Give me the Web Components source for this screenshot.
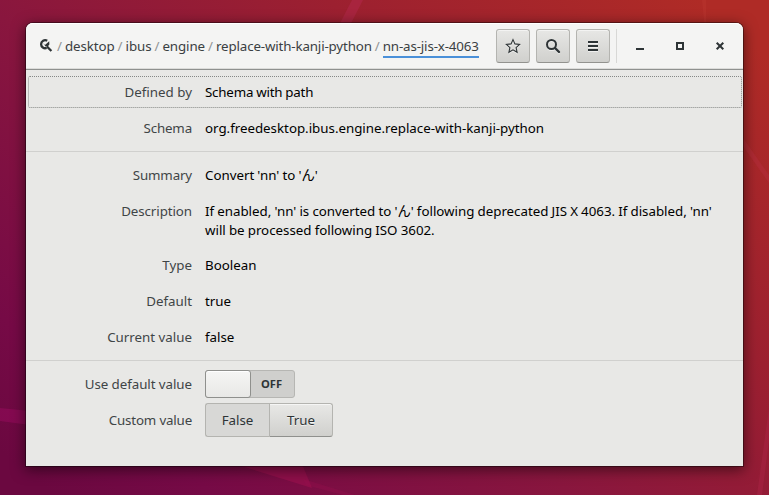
<!DOCTYPE html>
<html lang="en"><head><meta charset="utf-8"><title>dconf Editor</title>
<style>html,body{margin:0;height:100%;overflow:hidden}</style></head>
<body>
<desk-top>
<app-window>
<header-bar slot="header">
<path-bar slot="path" trail="desktop,ibus,engine,replace-with-kanji-python" current="nn-as-jis-x-4063"></path-bar>
<tool-button icon="star"></tool-button>
<tool-button icon="search"></tool-button>
<tool-button icon="menu"></tool-button>
<window-button slot="controls" icon="min"></window-button>
<window-button slot="controls" icon="max"></window-button>
<window-button slot="controls" icon="close"></window-button>
</header-bar>
<row-group>
<info-row label="Defined by" focused style="--value-spacing:-.2px">Schema with path</info-row>
<info-row label="Schema" style="--label-spacing:-.15px">org.freedesktop.ibus.engine.replace-with-kanji-python</info-row>
</row-group>
<row-group>
<info-row label="Summary" style="--label-spacing:-.15px">Convert 'nn' to 'ん'</info-row>
<info-row label="Description" style="--label-spacing:-.08px">If enabled, 'nn' is converted to 'ん' following deprecated JIS X 4063. If disabled, 'nn' will be processed following ISO 3602.</info-row>
<info-row label="Type">Boolean</info-row>
<info-row label="Default">true</info-row>
<info-row label="Current value">false</info-row>
</row-group>
<row-group>
<info-row label="Use default value" control style="--label-spacing:-.06px"><toggle-switch>OFF</toggle-switch></info-row>
<info-row label="Custom value" control style="--label-spacing:-.17px"><choice-buttons first="False" second="True"></choice-buttons></info-row>
</row-group>
</app-window>
</desk-top>
<script>
function define(name, html, setup) {
  const t = document.createElement('template');
  t.innerHTML = html;
  customElements.define(name, class extends HTMLElement {
    constructor() {
      super();
      this.attachShadow({ mode: 'open' }).appendChild(t.content.cloneNode(true));
    }
    connectedCallback() { if (setup) setup(this, this.shadowRoot); }
  });
}
const ICONS = {
  star: '<path d="M8 1.6 9.9 5.9 14.6 6.4 11.1 9.6 12.1 14.3 8 11.9 3.9 14.3 4.9 9.6 1.4 6.4 6.1 5.9Z" fill="none" stroke="#2e3436" stroke-width="1.1"/>',
  search: '<circle cx="6.5" cy="6.5" r="4.5" fill="none" stroke="#2e3436" stroke-width="2"/><path d="M10 10 14 14" stroke="#2e3436" stroke-width="2.4" stroke-linecap="round"/>',
  menu: '<path d="M3 3h10v2H3zM3 7h10v2H3zM3 11h10v2H3z" fill="#2e3436"/>',
  min: '<path d="M4 10h8v2H4z" fill="#2e3436"/>',
  max: '<path d="M5 5h6v6H5z" fill="none" stroke="#2e3436" stroke-width="2"/>',
  close: '<path d="M4.7 4.7 11.3 11.3M11.3 4.7 4.7 11.3" stroke="#2e3436" stroke-width="2" fill="none"/>'
};
const svg = i => '<svg width="16" height="16" viewBox="0 0 16 16">' + ICONS[i] + '</svg>';

define('desk-top', `<style>
:host{display:block;position:relative;box-sizing:border-box;width:769px;height:495px;padding:23px 26px 29px;overflow:hidden;
font:13.333px/18px "Noto Sans","Noto Sans CJK JP",sans-serif;color:#2e3436}
.bg{position:absolute;inset:0;display:block}
</style>
<svg class="bg" width="769" height="495" viewBox="0 0 769 495">
<defs><linearGradient id="g" gradientUnits="userSpaceOnUse" x1="130" y1="560" x2="640" y2="-50">
<stop offset="0" stop-color="#6b0840"/><stop offset=".13" stop-color="#760a46"/><stop offset=".42" stop-color="#89163e"/><stop offset=".7" stop-color="#9c2030"/><stop offset="1" stop-color="#af2b26"/></linearGradient></defs>
<rect width="769" height="495" fill="url(#g)"/>
<path d="M352 0h11L346 33h-11z" fill="#b0284a" opacity=".55"/>
<path d="M702 0h4v30h-1z" fill="#c03a36" opacity=".3"/>
<path d="M743 138 769 175v8L743 146z" fill="#b63040" opacity=".4"/>
<path d="M769 408 757 495h5L769 440z" fill="#ae2648" opacity=".4"/>
<path d="M0 408 30 411v14L0 421z" fill="#8f0a58" opacity=".65"/>
<path d="M235 464 312 488 302 464z" fill="#9c104e" opacity=".6"/>
<path d="M303 479 355 495H343L306 485z" fill="#9c104e" opacity=".3"/>
</svg><slot></slot>`);

define('app-window', `<style>
:host{display:flex;flex-direction:column;position:relative;height:443px;background:#e8e8e6;border-radius:7px 7px 0 0;
box-shadow:0 0 0 1px rgba(0,0,0,.38),0 3px 14px 1px rgba(0,0,0,.52)}
.body{padding:4px 0}
</style><slot name="header"></slot><div class="body"><slot></slot></div>`);

define('header-bar', `<style>
:host{display:flex;box-sizing:border-box;height:47px;padding:0 6px 1px 12px;align-items:center;background:#f4f4f3;
border-bottom:1px solid #8f918f;box-shadow:inset 0 -1px #dcdcda,inset 0 1px #fff;border-radius:7px 7px 0 0}
.tools{display:flex;gap:6px;margin-left:auto}
.sep{width:1px;height:34px;background:#d8d8d6;margin:0 6px 0 6px}
.win{display:flex;gap:6px}
</style><slot name="path"></slot><div class="tools"><slot></slot></div><div class="sep"></div><div class="win"><slot name="controls"></slot></div>`);

define('path-bar', `<style>
:host{display:flex;align-items:center;white-space:pre;color:#3a4042}
svg{display:block}
i{font-style:normal;color:#929595;width:11px;text-align:center}
b{font-weight:400;padding:3px 0 1px;border-bottom:2px solid transparent;letter-spacing:-.1px}
b.long{letter-spacing:-.145px}
.on{border-color:#4a90d9}
</style><svg width="16" height="16" viewBox="0 0 16 16"><path d="M9.2 2.7A4 4 0 0 0 3.1 6.2 4 4 0 0 0 8.6 9.9" fill="none" stroke="#2e3436" stroke-width="2.3"/><path d="M5 5.1 7 7 11.2 3.2 11.4 6.4 9.9 8.2 7.6 8.6Z" fill="#2e3436"/><path d="M8.8 8.4 13.4 13" stroke="#2e3436" stroke-width="2.2"/></svg>`,
(el, r) => {
  el.getAttribute('trail').split(',').concat(el.getAttribute('current')).forEach((t, n, all) => {
    const i = document.createElement('i'), b = document.createElement('b');
    i.textContent = '/'; b.textContent = t;
    b.classList.toggle('long', t.length > 10);
    b.classList.toggle('on', n === all.length - 1);
    r.append(i, b);
  });
});

define('tool-button', `<style>
:host{display:flex;align-items:center;justify-content:center;box-sizing:border-box;width:34px;height:34px;border:1px solid #b4b4b0;border-bottom-color:#93938f;border-radius:3px;
background:linear-gradient(#e7e7e5,#d0d0cd);box-shadow:inset 0 1px rgba(255,255,255,.5)}
svg{display:block;filter:drop-shadow(0 1px rgba(255,255,255,.6))}
</style><span></span>`, (el, r) => { r.querySelector('span').innerHTML = svg(el.getAttribute('icon')); });

define('window-button', `<style>
:host{display:flex;align-items:center;justify-content:center;width:34px;height:34px}svg{display:block}
</style><span></span>`, (el, r) => { r.querySelector('span').innerHTML = svg(el.getAttribute('icon')); });

define('row-group', `<style>
:host{display:block}
:host(:not(:first-of-type)){border-top:1px solid #d0d0ce;margin-top:5px;padding-top:5px}
</style><slot></slot>`);

define('info-row', `<style>
:host{display:grid;grid-template-columns:166px 1fr;column-gap:13px;box-sizing:border-box;min-height:36px;padding:9px 20px 7px 0;line-height:19px;position:relative}
.l{text-align:right;color:#3f4546;letter-spacing:var(--label-spacing,0)}
.v{color:#000;letter-spacing:var(--value-spacing,-.015px);word-spacing:-.3px}
:host([control]){padding:0;align-items:center}
:host([focused])::before{content:"";position:absolute;inset:2px 1px 2px 2px;border:1px dotted #858886;border-radius:2px}
</style><div class="l"></div><div class="v"><slot></slot></div>`,
(el, r) => { r.querySelector('.l').textContent = el.getAttribute('label'); });

define('toggle-switch', `<style>
:host{display:flex;box-sizing:border-box;width:90px;height:28px;border:1px solid #b6b6b3;border-radius:3px;background:#cfcfcd;color:#2e3436;font-weight:700;font-size:11.2px;line-height:26px}
.k{box-sizing:border-box;width:46px;height:28px;margin:-1px 0 0 -1px;border:1px solid #8f908d;border-radius:3px;background:linear-gradient(#f5f5f4,#e8e8e6);box-shadow:inset 0 1px #fff}
.t{flex:1;text-align:center;padding-right:2px}
</style><div class="k"></div><div class="t"><slot></slot></div>`);

define('choice-buttons', `<style>
:host{display:flex;width:128px;height:34px;line-height:32px;color:#2e3436;text-align:center}
div{box-sizing:border-box;border:1px solid #b4b4b0}
.a{width:64px;background:#d8d8d6;border-right:0;border-radius:3px 0 0 3px}
.b{width:64px;background:linear-gradient(#e8e8e6,#d0d0cd);border-bottom-color:#8f908d;border-radius:0 3px 3px 0;box-shadow:inset 0 1px rgba(255,255,255,.6);text-shadow:0 1px rgba(255,255,255,.7)}
</style><div class="a"></div><div class="b"></div>`, (el, r) => {
  r.querySelector('.a').textContent = el.getAttribute('first');
  r.querySelector('.b').textContent = el.getAttribute('second');
});
</script>
</body></html>
